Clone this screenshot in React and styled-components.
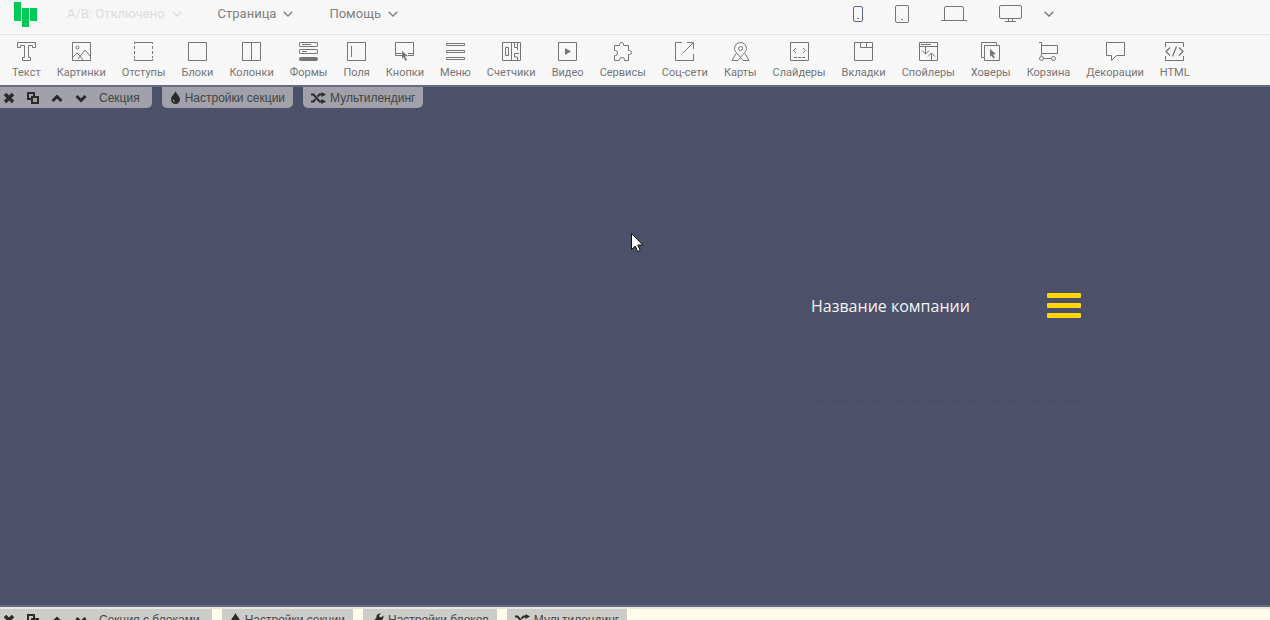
import React from "react";
import styled, { createGlobalStyle } from "styled-components";

const icons = {
  text: <path d="M.5.5h18v5h-3v-2h-4v12h2v3h-8v-3h2v-12h-4v2h-3z" />,
  image: (
    <>
      <path d="M.5.5h18v18H.5z" />
      <circle cx="5.5" cy="5.5" r="1.5" />
      <path d="M1 15l4-4 3 3M6 17l7-9 5 6M8 14l3 4" />
    </>
  ),
  spacing: (
    <>
      <path d="M.5 2V.5h18V2M.5 17v1.5h18V17" />
      <path d="M.5 4v12M18.5 4v12" strokeDasharray="3 2" />
    </>
  ),
  block: <path d="M.5.5h18v18H.5z" />,
  columns: <path d="M.5.5h18v18H.5zM9.5.5v18" />,
  forms: (
    <>
      <rect x=".5" y=".5" width="18" height="4" rx=".5" />
      <rect x=".5" y="7.5" width="18" height="4" rx=".5" />
      <path d="M3 2.5h9M3 9.5h5" />
      <rect x="0" y="15" width="19" height="4" rx="2" fill="currentColor" stroke="none" />
    </>
  ),
  field: <path d="M.5.5h18v18H.5zM4.5 4v11" />,
  button: (
    <>
      <path d="M7 13.5H.5V.5h18v13H13M.5 11.5h6M13 11.5h5" />
      <path d="M7 9l6 5-3 .5 2 3.500-1.500 1-2-4L7 17z" fill="currentColor" stroke="none" />
    </>
  ),
  menu: <path d="M.5 1.5h18v2H.5zM.5 8.5h18v2H.5zM.5 15.5h18v2H.5z" />,
  counter: (
    <>
      <path d="M.5.5h18v18H.5zM9.5.5v18M3.5 5.5h3v8h-3z" />
      <path d="M12.5 1v4.5h3V1M15.5 5.500v2.500M17 11.5h-4.500v3.500h3V18" />
    </>
  ),
  video: (
    <>
      <path d="M.5.5h18v18H.5z" />
      <path d="M7 6l6 3.5L7 13z" fill="currentColor" stroke="none" />
    </>
  ),
  service: (
    <path d="M1.5 3.5H6.500V2.500Q6.500.5 8.500.5T10.500 2.500V3.500H15.500V8.500H16.500Q18.500 8.500 18.500 10.500T16.500 12.500H15.500V18.500H11.500V17.500Q11.500 15.500 9 15.500T6.500 17.500V18.500H1.500V13.500H2.500Q4.500 13.500 4.500 11T2.500 8.500H1.500Z" />
  ),
  social: <path d="M7 .5H.5v18h18V12M18.5 7V.5H12M7.5 11.5L18 1" />,
  map: (
    <>
      <path d="M9.5 15.5C7 12 3.500 9.500 3.500 6.500a6 6 0 0 1 12 0c0 3-3.500 5.500-6 9z" />
      <circle cx="9.5" cy="6.5" r="2" />
      <path d="M5 11.5L1 18.5h6l2.500-3 2.500 3h6l-4-7" />
    </>
  ),
  slider: (
    <>
      <path d="M.5.5h18v18H.5z" />
      <path d="M6 6L3.5 8.5 6 11M13 6l2.500 2.500L13 11" />
      <path d="M4 15.5h11" strokeDasharray="3 1" />
    </>
  ),
  tabs: <path d="M.5.5h18v18H.5zM6.5.5v5h12M12.5.5v5" />,
  spoiler: (
    <>
      <path d="M.5.5h18v18H.5zM.5 4.5h18M2 2.5h10" />
      <path d="M6.5 5v7M3 8.5l3.500 3.500L10 8.500M12.5 18v-7M9 14.5l3.500-3.500 3.500 3.500" />
    </>
  ),
  hover: (
    <>
      <path d="M3.5 15.5h-3V.5h15v3M3.5 3.5h15v15h-15z" />
      <path d="M9 7l6 5-3 .5 2 3-1.500 1-2-3L9 15z" fill="currentColor" stroke="none" />
    </>
  ),
  cart: (
    <>
      <path d="M0 .5h2.500v11h16v-8h-16M3 11.5L2 14" />
      <circle cx="2.5" cy="16.5" r="2" />
      <circle cx="14.5" cy="16.5" r="2" />
      <path d="M5 16.5h7" />
    </>
  ),
  decor: <path d="M.5.5h18v13h-8l-5 5v-5h-5z" />,
  html: (
    <>
      <path d="M.5 5V.5h18V5M.5 14v4.500h18V14" />
      <path d="M5 5.5l-4 4 4 4M14 5.5l4 4-4 4M11.5 4.5l-4 10" strokeWidth="1.3" />
    </>
  ),
};

const tools = [
  ["text", "Текст"],
  ["image", "Картинки"],
  ["spacing", "Отступы"],
  ["block", "Блоки"],
  ["columns", "Колонки"],
  ["forms", "Формы"],
  ["field", "Поля"],
  ["button", "Кнопки"],
  ["menu", "Меню"],
  ["counter", "Счетчики"],
  ["video", "Видео"],
  ["service", "Сервисы"],
  ["social", "Соц-сети"],
  ["map", "Карты"],
  ["slider", "Слайдеры"],
  ["tabs", "Вкладки"],
  ["spoiler", "Спойлеры"],
  ["hover", "Ховеры"],
  ["cart", "Корзина"],
  ["decor", "Декорации"],
  ["html", "HTML"],
];

const Chevron = () => (
  <svg width="10" height="6" viewBox="0 0 10 6" fill="none" stroke="currentColor" strokeWidth="1.4">
    <path d="M.7.8L5 5 9.3.8" />
  </svg>
);

const Drop = () => (
  <svg width="11" height="13" viewBox="0 0 11 13" fill="currentColor">
    <path d="M5.5 0C6 2.5 10 5 10 8.500a4.500 4.500 0 0 1-9 0C1 5 5 2.500 5.500 0z" />
    <path d="M3 8.5a2 2 0 0 0 2 2" stroke="#a0a1a9" fill="none" />
  </svg>
);

const Wrench = () => (
  <svg width="13" height="13" viewBox="0 0 13 13" fill="currentColor">
    <path d="M12.300 2.500L10 4.500 8.300 3.700 8 2.500 10 .5C7 0 5 2 5.500 4.800L.8 9.600c-1 1.500 1 3.500 2.600 2.500L8 7.500c3 .5 5-2 4.300-5z" />
  </svg>
);

const Shuffle = () => (
  <svg width="15" height="12" viewBox="0 0 15 12" fill="none" stroke="currentColor" strokeWidth="2">
    <path d="M0 2.5h2.500l6 7H11M0 9.5h2.500l2-2.500M6.5 4.700L8.500 2.500H11" />
    <path d="M10.5 0v5L15 2.500zM10.5 7v5L15 9.500z" fill="currentColor" stroke="none" />
  </svg>
);

function SectionTabs({ name, withBlocks, light }) {
  return (
    <Tabs>
      <Controls $light={light}>
        <IconButton aria-label="Удалить">
          <svg width="12" height="12" viewBox="0 0 12 12" stroke="currentColor" strokeWidth="3.5">
            <path d="M2 2l8 8M10 2l-8 8" />
          </svg>
        </IconButton>
        <IconButton aria-label="Копировать">
          <svg width="12" height="12" viewBox="0 0 12 12" fill="none" stroke="currentColor" strokeWidth="2">
            <path d="M4 7H1V1h6v3M5 5h6v6H5z" />
          </svg>
        </IconButton>
        <IconButton aria-label="Выше">
          <svg width="12" height="12" viewBox="0 0 12 12" fill="none" stroke="currentColor" strokeWidth="3">
            <path d="M1.5 9L6 4.500 10.500 9" />
          </svg>
        </IconButton>
        <IconButton aria-label="Ниже">
          <svg width="12" height="12" viewBox="0 0 12 12" fill="none" stroke="currentColor" strokeWidth="3">
            <path d="M1.5 4L6 8.500 10.500 4" />
          </svg>
        </IconButton>
        <span>{name}</span>
      </Controls>
      <TabButton $light={light}>
        <Drop />
        Настройки секции
      </TabButton>
      {withBlocks && (
        <TabButton $light={light}>
          <Wrench />
          Настройки блоков
        </TabButton>
      )}
      <TabButton $light={light}>
        <Shuffle />
        Мультилендинг
      </TabButton>
    </Tabs>
  );
}

function App() {
  return (
    <Page>
      <GlobalStyle />
      <TopBar>
        <Logo href="#" aria-label="Главная">
          <svg width="23" height="25" viewBox="0 0 23 25" fill="#00cb55">
            <path d="M0 0h7v19H0zM8 6h7v19H8zM16 6h7v13h-7z" />
          </svg>
        </Logo>
        <Menus>
          <MenuButton disabled>
            A/B: Отключено <Chevron />
          </MenuButton>
          <MenuButton>
            Страница <Chevron />
          </MenuButton>
          <MenuButton>
            Помощь <Chevron />
          </MenuButton>
        </Menus>
        <Devices>
          <DeviceButton $active aria-label="Телефон">
            <svg width="10" height="16" viewBox="0 0 10 16">
              <rect x=".5" y=".5" width="9" height="15" rx="1.5" />
              <path d="M4 12.5h2" />
            </svg>
          </DeviceButton>
          <DeviceButton aria-label="Планшет">
            <svg width="14" height="18" viewBox="0 0 14 18">
              <rect x=".5" y=".5" width="13" height="17" rx="1.5" />
              <path d="M6 14.5h2" />
            </svg>
          </DeviceButton>
          <DeviceButton aria-label="Ноутбук">
            <svg width="26" height="16" viewBox="0 0 26 16">
              <path d="M3.5 15V2q0-1.500 1.500-1.500h16q1.500 0 1.500 1.500v13M0 14.5h26" />
            </svg>
          </DeviceButton>
          <DeviceButton aria-label="Компьютер">
            <svg width="23" height="18" viewBox="0 0 23 18">
              <rect x=".5" y=".5" width="22" height="13" rx="1.5" />
              <path d="M9.5 14v3M13.5 14v3M6 16.5h11" />
            </svg>
          </DeviceButton>
        </Devices>
        <MoreButton aria-label="Ещё">
          <Chevron />
        </MoreButton>
      </TopBar>
      <ToolBar>
        {tools.map(([icon, label]) => (
          <Tool key={icon}>
            <svg width="19" height="19" viewBox="0 0 19 19" fill="none" stroke="currentColor">
              {icons[icon]}
            </svg>
            {label}
          </Tool>
        ))}
      </ToolBar>
      <Hero>
        <SectionTabs name="Секция" />
        <Widget>
          <WidgetHead>
            <Company>Название компании</Company>
            <Burger aria-label="Меню">
              <i />
              <i />
              <i />
            </Burger>
          </WidgetHead>
          <WidgetBody />
        </Widget>
      </Hero>
      <NextSection>
        <SectionTabs name="Секция с блоками" withBlocks light />
      </NextSection>
      <Pointer width="12" height="20" viewBox="0 0 12 20">
        <path
          d="M.5.5v16l3.700-3.500 2.500 5.500 2.500-1-2.500-5.500h5z"
          fill="#fff"
          stroke="#111"
        />
      </Pointer>
    </Page>
  );
}

export default App;

const GlobalStyle = createGlobalStyle`
  * {
    box-sizing: border-box;
  }

  body {
    margin: 0;
    font-family: Roboto, sans-serif;
  }

  button {
    padding: 0;
    border: 0;
    background: none;
    color: inherit;
    font: inherit;
    cursor: pointer;
  }

  svg {
    display: block;
    flex-shrink: 0;
  }
`;

const Page = styled.div`
  position: relative;
  display: flex;
  flex-direction: column;
  height: 100vh;
  overflow: hidden;
`;

const TopBar = styled.header`
  display: flex;
  align-items: center;
  height: 35px;
  flex-shrink: 0;
  padding: 0 216px 6px 14px;
  background: #f7f7f7;
  border-bottom: 1px solid #e5e5e5;
`;

const Logo = styled.a`
  display: block;
`;

const Menus = styled.nav`
  display: flex;
  gap: 36px;
  margin-left: 30px;
`;

const MenuButton = styled.button`
  display: flex;
  align-items: center;
  gap: 7px;
  color: ${(props) => (props.disabled ? "#dcdcdc" : "#808080")};
  font-size: 13px;
  line-height: 16px;
`;

const Devices = styled.div`
  display: flex;
  align-items: center;
  gap: 32px;
  margin-left: auto;
`;

const DeviceButton = styled.button`
  color: ${(props) => (props.$active ? "#5e6580" : "#777")};

  svg {
    fill: none;
    stroke: currentColor;
  }
`;

const MoreButton = styled.button`
  margin-left: 22px;
  color: #777;
`;

const ToolBar = styled.div`
  display: flex;
  gap: 16px;
  height: 50px;
  flex-shrink: 0;
  padding: 7px 12px 0;
  background: #f7f7f7;
`;

const Tool = styled.button`
  display: flex;
  flex-direction: column;
  align-items: center;
  gap: 5px;
  height: 38px;
  color: #757575;
  font-size: 11px;
  line-height: 14px;
  white-space: nowrap;
`;

const Hero = styled.section`
  position: relative;
  flex: 1;
  display: flex;
  align-items: center;
  justify-content: flex-end;
  padding-right: 179px;
  background: #4c5069;
  border-top: 2px solid #676a80;
  border-bottom: 2px solid #676a80;
`;

const NextSection = styled.section`
  position: relative;
  height: 13px;
  flex-shrink: 0;
  overflow: hidden;
  background: #fffde9;
  border-top: 2px solid #e9e7e0;
`;

const Tabs = styled.div`
  position: absolute;
  top: 0;
  left: 0;
  display: flex;
  gap: 10px;
`;

const Tab = styled.div`
  display: flex;
  align-items: center;
  height: 21px;
  background: ${(props) => (props.$light ? "#cccdc8" : "#a0a1a9")};
  border-radius: 0 0 5px 5px;
  color: #444;
  font-family: "Liberation Sans", Arial, sans-serif;
  font-size: 12px;
  white-space: nowrap;

  svg {
    color: #2b2b2b;
  }
`;

const Controls = styled(Tab)`
  gap: 12px;
  padding: 0 12px 0 3px;
  border-bottom-left-radius: 0;
`;

const TabButton = styled(Tab).attrs({ as: "button" })`
  && {
    gap: 4px;
    padding: 0 8px;
    background: ${(props) => (props.$light ? "#cccdc8" : "#a0a1a9")};
    color: #444;
    font-family: "Liberation Sans", Arial, sans-serif;
    font-size: 12px;
  }
`;

const IconButton = styled.button`
  width: 12px;
  height: 12px;
`;

const Widget = styled.div`
  width: 290px;
  border: 1px dashed #51555f;
`;

const WidgetHead = styled.div`
  display: flex;
  align-items: center;
  gap: 4px;
  padding: 4px;
  border-bottom: 1px dashed #51555f;
`;

const Company = styled.div`
  flex: 1;
  padding: 4px;
  border: 1px dashed #50546a;
  color: #f4f4f4;
  font-family: "Open Sans", sans-serif;
  font-size: 16px;
  line-height: 22px;
`;

const Burger = styled.button`
  display: flex;
  flex-direction: column;
  gap: 5px;
  width: 34px;
  margin-right: 5px;

  i {
    width: 100%;
    height: 5px;
    background: #ffd600;
    border-radius: 1px;
  }
`;

const WidgetBody = styled.div`
  height: 80px;
  border-bottom: 1px solid #50546a;
`;

const Pointer = styled.svg`
  position: absolute;
  top: 233px;
  left: 631px;
`;
